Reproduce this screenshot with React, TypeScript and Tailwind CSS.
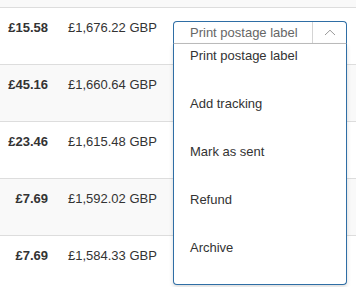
import { useState } from 'react'

const ROWS = [
  { cost: '£15.58', total: '£1,676.22 GBP' },
  { cost: '£45.16', total: '£1,660.64 GBP' },
  { cost: '£23.46', total: '£1,615.48 GBP' },
  { cost: '£7.69', total: '£1,592.02 GBP' },
  { cost: '£7.69', total: '£1,584.33 GBP' },
]

const ACTIONS = ['Print postage label', 'Add tracking', 'Mark as sent', 'Refund', 'Archive']

function ActionSelect() {
  const [value] = useState(ACTIONS[0])
  return (
    <div className="relative w-[174px]">
      <div className="flex h-[23px] items-stretch rounded-t-[4px] border border-[#2f6ea5] border-b-[#bdbdbd] bg-white">
        <div className="flex flex-1 items-center pl-4 text-[#666]">{value}</div>
        <div className="flex w-[34px] items-center justify-center border-l border-[#d4d4d4]">
          <svg width="12" height="7" viewBox="0 0 12 7" fill="none">
            <path d="M1 6L6 1.2L11 6" stroke="#9a9a9a" strokeWidth="1" />
          </svg>
        </div>
      </div>
      <ul className="absolute left-0 right-0 top-full z-10 rounded-b-[4px] border-x border-b border-[#2f6ea5] bg-white shadow-[0_2px_4px_rgba(0,0,0,0.15)]">
        {ACTIONS.map((a) => (
          <li key={a} className="h-12 pl-4 pt-[3px] leading-[18px] text-[#333]">
            {a}
          </li>
        ))}
      </ul>
    </div>
  )
}

export default function App() {
  return (
    <div className="h-[287px] w-[356px] overflow-hidden bg-white font-['Liberation_Sans',Arial,sans-serif] text-[13px] text-[#333]">
      <div className="h-[7px] bg-[#f9f9f9]" />
      {ROWS.map((r, i) => (
        <div
          key={i}
          className={`grid h-[57px] grid-cols-[56px_117px_1fr] border-t border-[#dddddd] ${i % 2 === 1 ? 'bg-[#f9f9f9]' : 'bg-white'}`}
        >
          <div className="pr-2 pt-[11px] text-right font-bold leading-[18px]">{r.cost}</div>
          <div className="pl-3 pt-[11px] leading-[18px]">{r.total}</div>
          <div className="pt-[13px]">{i === 0 && <ActionSelect />}</div>
        </div>
      ))}
    </div>
  )
}
